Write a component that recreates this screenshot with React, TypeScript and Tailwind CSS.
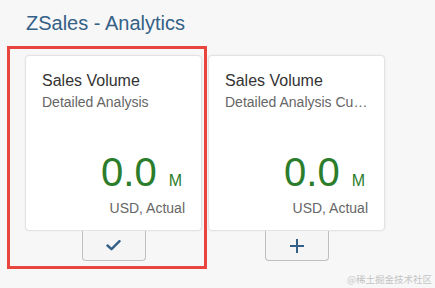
const TILES = [
  { title: 'Sales Volume', subtitle: 'Detailed Analysis', value: '0.0', scale: 'M', footer: 'USD, Actual', action: 'check' },
  { title: 'Sales Volume', subtitle: 'Detailed Analysis Cu…', value: '0.0', scale: 'M', footer: 'USD, Actual', action: 'add' },
]

function CheckIcon() {
  return (
    <svg width="15" height="11" viewBox="0 0 15 11" fill="none">
      <path d="M1.5 5.5 L5.5 9.2 L13.5 1.2" stroke="#346187" strokeWidth="2.4" strokeLinecap="round" strokeLinejoin="round" />
    </svg>
  )
}

function PlusIcon() {
  return (
    <svg width="16" height="16" viewBox="0 0 16 16" fill="none">
      <path d="M8 1 V15 M1 8 H15" stroke="#346187" strokeWidth="2" />
    </svg>
  )
}

export default function App() {
  return (
    <div className="relative w-[435px] h-[288px] overflow-hidden bg-[#f7f7f7] font-['Liberation_Sans',Arial,sans-serif]">
      <h2 className="pl-[26px] pt-[11px] text-[20px] leading-[24px] text-[#346187]">ZSales - Analytics</h2>

      <div className="mt-[20px] flex gap-[6px] pl-[25px]">
        {TILES.map((tile, index) => (
          <div key={index} className="flex w-[177px] flex-col items-center">
            <div className="flex h-[176px] w-full flex-col rounded-[4px] border border-[#e3e3e3] bg-white px-4 pt-4 pb-[13px] shadow-[0_0_2px_rgba(0,0,0,0.08)]">
              <p className="text-[16px] leading-[18px] text-[#333333]">{tile.title}</p>
              <p className="mt-[3px] whitespace-nowrap text-[14px] leading-[18px] text-[#666666]">{tile.subtitle}</p>
              <div className="mt-auto flex items-baseline justify-end">
                <span className="text-[40px] leading-[40px] text-[#2b7d2b]">{tile.value}</span>
                <span className="ml-[12px] mr-[3px] text-[16px] leading-[18px] text-[#2b7d2b]">{tile.scale}</span>
              </div>
              <p className="mt-[7px] text-right text-[14px] leading-[18px] text-[#666666]">{tile.footer}</p>
            </div>
            <button className="flex h-[30px] w-[64px] items-center justify-center rounded-b-[4px] border border-t-0 border-[#bfbfbf] bg-[#f5f5f5]">
              {tile.action === 'check' ? <CheckIcon /> : <PlusIcon />}
            </button>
          </div>
        ))}
      </div>

      <div className="pointer-events-none absolute left-[7px] top-[46px] h-[223px] w-[200px] border-[3px] border-[#e8453f]" />

      <span className="absolute right-[3px] bottom-[3px] text-[9.5px] leading-[12px] text-[#c4c4c4] font-['Noto_Sans_CJK_SC',sans-serif]">
        @稀土掘金技术社区
      </span>
    </div>
  )
}
